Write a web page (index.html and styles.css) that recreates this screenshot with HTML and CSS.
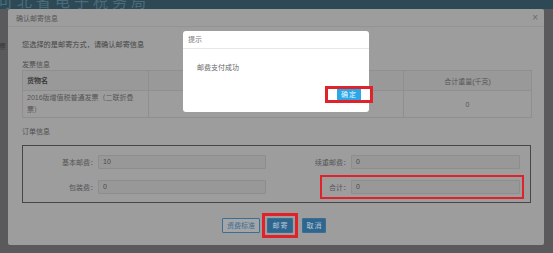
FILE: index.html
```html
<!DOCTYPE html>
<html>
<head>
    <meta charset="UTF-8">
    <title>确认邮寄信息</title>
    <link rel="stylesheet" href="styles.css">
</head>
<body>
    <div class="topbar"><span class="site">可北省电子税务局</span></div>
    <div class="side">票</div>
    <div class="modal">
        <div class="modal-head">
            <span>确认邮寄信息</span>
            <span class="close">×</span>
        </div>
        <div class="modal-body">
            <p class="tip">您选择的是邮寄方式，请确认邮寄信息</p>
            <p class="sub">发票信息</p>
            <table class="goods">
                <tr class="th">
                    <td class="c1">货物名</td>
                    <td class="c2"></td>
                    <td class="c3">合计重量(千克)</td>
                </tr>
                <tr>
                    <td class="c1">2016版增值税普通发票（二联折叠票）</td>
                    <td class="c2"></td>
                    <td class="c3">0</td>
                </tr>
            </table>
            <p class="sub order">订单信息</p>
            <div class="fields">
                <div class="row">
                    <label>基本邮费：</label><div class="inp">10</div>
                    <label class="r">续重邮费：</label><div class="inp wide">0</div>
                </div>
                <div class="row">
                    <label>包装费：</label><div class="inp">0</div>
                    <div class="mark">
                        <label class="r">合计：</label><div class="inp wide">0</div>
                    </div>
                </div>
            </div>
            <div class="btns">
                <span class="btn ghost">资费标准</span>
                <span class="marked"><span class="btn solid">邮寄</span></span>
                <span class="btn solid cancel">取消</span>
            </div>
        </div>
    </div>
    <div class="popup">
        <div class="popup-head">提示</div>
        <div class="popup-msg">邮费支付成功</div>
        <div class="popup-foot">
            <span class="ok-box"><span class="ok">确定</span></span>
        </div>
    </div>
</body>
</html>
```

FILE: styles.css
```css
* {
    padding: 0;
    margin: 0;
    box-sizing: border-box;
}
body {
    width: 553px;
    height: 253px;
    overflow: hidden;
    background: #5a5a5d;
    font-family: "Liberation Sans", "Noto Sans CJK SC", sans-serif;
    font-size: 7px;
    color: #4c4c4c;
    position: relative;
}
.topbar {
    height: 9px;
    background: #2e4956;
    overflow: hidden;
}
.site {
    display: block;
    margin-left: -2px;
    margin-top: -6px;
    font-size: 15px;
    line-height: 15px;
    color: #4b6c7a;
    letter-spacing: 4px;
}
.side {
    position: absolute;
    left: -1px;
    top: 41px;
    width: 9px;
    overflow: hidden;
    color: #3a3a3a;
}
.modal {
    margin-left: 8px;
    width: 536px;
    height: 236px;
    background: #9d9d9d;
    border-radius: 2px;
}
.modal-head {
    height: 18px;
    border-bottom: 1px solid #939393;
    display: flex;
    align-items: center;
    justify-content: space-between;
    padding: 0 6px 0 8px;
    color: #555;
}
.close {
    font-size: 10px;
    color: #6a6a6a;
}
.modal-body {
    padding: 13px 12px 0 14px;
}
.tip {
    font-size: 7.2px;
    color: #444;
    line-height: 9px;
}
.sub {
    margin-top: 11px;
    line-height: 9px;
    color: #505050;
}
.goods {
    margin-top: 1px;
    width: 510px;
    border-collapse: collapse;
}
.goods td {
    border: 1px solid #8f8f8f;
    color: #555;
}
.th td {
    height: 20px;
    background: #999;
}
.th .c1 {
    font-weight: bold;
    color: #3c3c3c;
}
.goods .c1 {
    width: 126px;
    padding: 0 4px;
    line-height: 12px;
}
.goods .c2 {
    width: 255px;
}
.goods .c3 {
    text-align: center;
    height: 27px;
}
.th .c3 {
    height: 20px;
}
.order {
    margin-top: 9px;
}
.fields {
    margin-top: 9px;
    width: 509px;
    height: 58px;
    border: 1px solid #474747;
    padding-top: 9px;
}
.row {
    display: flex;
    align-items: center;
    height: 14px;
    margin-bottom: 11px;
}
.row label {
    width: 74px;
    text-align: right;
    color: #555;
}
.row .r {
    width: 84px;
}
.inp {
    width: 168px;
    height: 14px;
    margin-left: 1px;
    border: 1px solid #8d8d8d;
    background: #989898;
    padding-left: 4px;
    line-height: 12px;
    color: #4a4a4a;
    border-radius: 1px;
}
.wide {
    width: 169px;
}
.mark {
    display: flex;
    align-items: center;
    margin-left: 54px;
    padding: 3px 2px 3px 0;
    border: 2px solid #e0222a;
}
.mark .r {
    width: 28px;
}
.btns {
    display: flex;
    justify-content: center;
    align-items: center;
    margin-top: 10px;
    padding-right: 6px;
}
.btn {
    display: inline-block;
    height: 15px;
    line-height: 13px;
    text-align: center;
    border: 1px solid #3a6e93;
    border-radius: 1px;
}
.ghost {
    width: 38px;
    color: #3b6a8e;
    background: #a3a6a8;
    margin-right: 2px;
}
.solid {
    width: 26px;
    background: #2f6690;
    color: #b9c8d4;
    letter-spacing: 1px;
    padding-left: 1px;
}
.cancel {
    width: 24px;
    margin-left: 4px;
}
.marked {
    display: inline-block;
    padding: 2px;
    border: 3px solid #e0222a;
}
.marked .btn {
    display: block;
}
.popup {
    position: absolute;
    left: 183px;
    top: 31px;
    width: 186px;
    height: 81px;
    background: #fff;
    border-radius: 3px;
    color: #666;
}
.popup-head {
    height: 18px;
    line-height: 18px;
    padding-left: 5px;
    border-bottom: 1px solid #e8e8e8;
    color: #777;
}
.popup-msg {
    padding: 14px 0 0 14px;
    line-height: 9px;
}
.popup-foot {
    display: flex;
    justify-content: flex-end;
    margin-top: 14px;
    margin-right: -4px;
}
.ok-box {
    display: inline-block;
    border: 3px solid #e0222a;
    padding: 0 9px 0 9px;
    background: #fff;
}
.ok {
    display: inline-block;
    width: 24px;
    height: 11px;
    line-height: 11px;
    text-align: center;
    background: #2aa7e6;
    color: #e9f6fd;
    letter-spacing: 1px;
}
```
